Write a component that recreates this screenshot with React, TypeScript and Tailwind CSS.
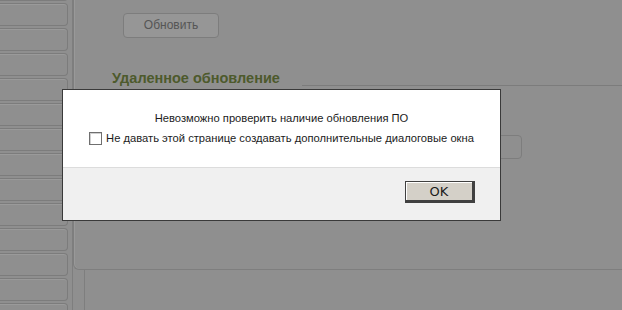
import React from 'react'

const SIDE_ITEMS = Array.from({ length: 14 })

function Sidebar() {
    return (
        <div className="w-[73px] shrink-0 border-r border-[#7e7e7e] pr-[4px] -mt-[22px]">
            {SIDE_ITEMS.map((_, i) => (
                <div
                    key={i}
                    className="h-[23px] mb-[2px] border border-l-0 border-[#7c7c7c] rounded-r-[4px] shadow-[inset_0_1px_0_#9a9a9a]"
                />
            ))}
        </div>
    )
}

function Dialog() {
    return (
        <div className="absolute left-[62px] top-[89px] w-[439px] h-[132px] flex flex-col border border-[#3a3a3a] bg-white font-['Liberation_Sans',Arial,sans-serif] text-[11.2px] text-[#1b1b1b]">
            <div className="h-[77px] flex flex-col items-center pt-[21px] gap-[6px]">
                <p className="leading-[14px]">Невозможно проверить наличие обновления ПО</p>
                <label className="flex items-center gap-[4px] leading-[14px]">
                    <span className="w-[13px] h-[13px] border border-[#6f6f6f] bg-white shadow-[inset_1px_1px_0_#d0d0d0]" />
                    Не давать этой странице создавать дополнительные диалоговые окна
                </label>
            </div>
            <div className="flex-1 border-t border-[#dcdcdc] bg-[#f0f0f0] flex justify-end items-start pt-[13px] pr-[25px]">
                <button className="w-[70px] h-[22px] bg-[#d4d0c8] border border-[#404040] border-r-[3px] border-b-[3px] shadow-[inset_1px_1px_0_#ffffff] text-[13px] leading-none text-[#1b1b1b] font-['DejaVu_Sans',sans-serif]">
                    OK
                </button>
            </div>
        </div>
    )
}

export default function App() {
    return (
        <div className="relative w-[622px] h-[310px] overflow-hidden bg-[#8f8f8f] font-['Liberation_Sans',Arial,sans-serif]">
            <div className="flex h-full">
                <Sidebar />
                <div className="flex-1 flex flex-col">
                    {/* Main panel */}
                    <div className="h-[270px] border-l border-b border-[#7e7e7e] rounded-bl-[6px] shadow-[inset_1px_0_0_#999999] pl-[38px] pt-[12px]">
                        <button className="ml-[11px] w-[96px] h-[25px] rounded-[4px] border border-[#7d7d7d] bg-[#969696] text-[12px] text-[#555555]">
                            Обновить
                        </button>
                        <h2 className="mt-[32px] text-[14.5px] font-bold leading-[16px] text-[#4d5a2c]">Удаленное обновление</h2>
                        <div className="mt-[-1px] border-t border-[#7c7c7c] ml-[190px]" />
                        <div className="mt-[49px] ml-[300px] w-[110px] h-[24px] border border-[#7d7d7d] rounded-r-[4px]" />
                    </div>
                    {/* Lower panel */}
                    <div className="flex-1 ml-[11px] border-l border-[#7e7e7e]" />
                </div>
            </div>
            <Dialog />
        </div>
    )
}
